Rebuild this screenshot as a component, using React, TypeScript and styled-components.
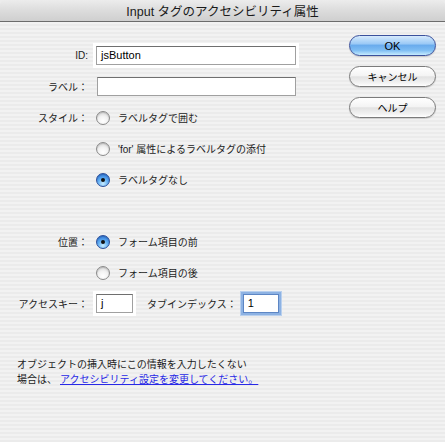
import styled, { createGlobalStyle, css } from "styled-components";

const GlobalStyle = createGlobalStyle`
    html, body {
        margin: 0;
        padding: 0;
        background: #ececec;
    }
    body {
        font-family: "Liberation Sans", "Noto Sans CJK JP", sans-serif;
        color: #1c1c1c;
    }
`;

const Dialog = styled.div`
    width: 445px;
    height: 442px;
    display: flex;
    flex-direction: column;
    overflow: hidden;
`;
const TitleBar = styled.div`
    height: 21px;
    flex: none;
    display: flex;
    align-items: center;
    justify-content: center;
    border-radius: 5px 5px 0 0;
    border-bottom: 1px solid #6c6c6c;
    background: linear-gradient(to bottom, #ececec 0%, #dcdcdc 50%, #cfcfcf 100%);
    font-size: 12.5px;
    color: #1a1a1a;
`;
const Body = styled.div`
    flex: 1;
    display: flex;
    flex-direction: column;
    background: repeating-linear-gradient(
        to bottom,
        #f2f2f2 0px,
        #f2f2f2 2px,
        #ebebeb 2px,
        #ebebeb 4px
    );
`;
const Top = styled.div`
    display: flex;
    justify-content: space-between;
`;
const Form = styled.div`
    display: grid;
    grid-template-columns: 88px 200px;
    grid-auto-rows: 31px;
    column-gap: 8px;
    align-items: center;
    padding-top: 18px;
    font-size: 10px;
`;
const Label = styled.div`
    text-align: right;
    white-space: nowrap;
`;
const Spacer = styled.div`
    grid-column: span 2;
`;
const Control = styled.div`
    display: flex;
    align-items: center;
    white-space: nowrap;
`;
const TextInput = styled.div<{ $width: number; $halo?: boolean; $focus?: boolean }>`
    width: ${(p) => p.$width}px;
    height: 19px;
    box-sizing: border-box;
    margin-left: ${(p) => (p.$halo || p.$focus ? 0 : 1)}px;
    background: #fff;
    border: 1px solid #a0a0a0;
    border-top-color: #6f6f6f;
    padding: 0 4px;
    font-size: 11px;
    line-height: 17px;
    color: #000;
    ${(p) =>
        p.$halo &&
        css`
            box-shadow: 0 0 0 3px #fff;
        `}
    ${(p) =>
        p.$focus &&
        css`
            border-color: #5d86c4;
            box-shadow: 0 0 0 2px #8db2e3, 0 0 0 3px #b9d0ee;
        `}
`;
const RadioDot = styled.span<{ $on?: boolean }>`
    width: 14px;
    height: 14px;
    flex: none;
    border-radius: 50%;
    box-sizing: border-box;
    display: inline-flex;
    align-items: center;
    justify-content: center;
    margin-right: 8px;
    border: 1px solid #8a8a8a;
    background: radial-gradient(circle at 50% 75%, #ffffff 0%, #f2f2f2 45%, #c9c9c9 100%);
    box-shadow: inset 0 1px 1px rgba(0, 0, 0, 0.15);
    ${(p) =>
        p.$on &&
        css`
            border-color: #2b4f9a;
            background: radial-gradient(circle at 50% 80%, #c8ecff 0%, #5fadf2 45%, #2266d0 100%);
            &::after {
                content: "";
                width: 4px;
                height: 4px;
                border-radius: 50%;
                background: #111;
            }
        `}
`;
const TabLabel = styled.span`
    margin: 0 6px 0 14px;
`;
const Buttons = styled.div`
    display: flex;
    flex-direction: column;
    gap: 10px;
    padding: 13px 9px 0 0;
`;
const Button = styled.div<{ $primary?: boolean }>`
    width: 87px;
    height: 21px;
    box-sizing: border-box;
    border-radius: 11px;
    display: flex;
    align-items: center;
    justify-content: center;
    font-size: 10px;
    color: #000;
    border: 1px solid #7b7b7b;
    background: linear-gradient(to bottom, #ffffff 0%, #f4f4f4 45%, #e2e2e2 52%, #f3f3f3 85%, #ffffff 100%);
    box-shadow: 0 1px 1px rgba(0, 0, 0, 0.15);
    ${(p) =>
        p.$primary &&
        css`
            font-size: 11px;
            border-color: #3b519c;
            background: linear-gradient(
                to bottom,
                #d6eafc 0%,
                #9ccaf6 40%,
                #6aaced 50%,
                #7ebdf3 75%,
                #c6ecff 100%
            );
        `}
`;
const Note = styled.div`
    margin: 38px 0 0 17px;
    font-size: 10px;
    line-height: 15px;
`;
const Link = styled.a`
    color: #2828e6;
    text-decoration: underline;
    margin-left: 3px;
`;

function Radio({ on, children }: { on?: boolean; children: string }) {
    return (
        <Control>
            <RadioDot $on={on} />
            {children}
        </Control>
    );
}

function App() {
    return (
        <Dialog>
            <GlobalStyle />
            <TitleBar>Input タグのアクセシビリティ属性</TitleBar>
            <Body>
                <Top>
                    <Form>
                        <Label>ID:</Label>
                        <Control>
                            <TextInput $width={200} $halo>jsButton</TextInput>
                        </Control>

                        <Label>ラベル：</Label>
                        <Control>
                            <TextInput $width={200} />
                        </Control>

                        <Label>スタイル：</Label>
                        <Radio>ラベルタグで囲む</Radio>
                        <div />
                        <Radio>'for' 属性によるラベルタグの添付</Radio>
                        <div />
                        <Radio on>ラベルタグなし</Radio>

                        <Spacer />

                        <Label>位置：</Label>
                        <Radio on>フォーム項目の前</Radio>
                        <div />
                        <Radio>フォーム項目の後</Radio>

                        <Label>アクセスキー：</Label>
                        <Control>
                            <TextInput $width={37} $halo>j</TextInput>
                            <TabLabel>タブインデックス：</TabLabel>
                            <TextInput $width={36} $focus>1</TextInput>
                        </Control>
                    </Form>
                    <Buttons>
                        <Button $primary>OK</Button>
                        <Button>キャンセル</Button>
                        <Button>ヘルプ</Button>
                    </Buttons>
                </Top>
                <Note>
                    オブジェクトの挿入時にこの情報を入力したくない
                    <br />
                    場合は、
                    <Link>アクセシビリティ設定を変更してください。</Link>
                </Note>
            </Body>
        </Dialog>
    );
}

export default App;
